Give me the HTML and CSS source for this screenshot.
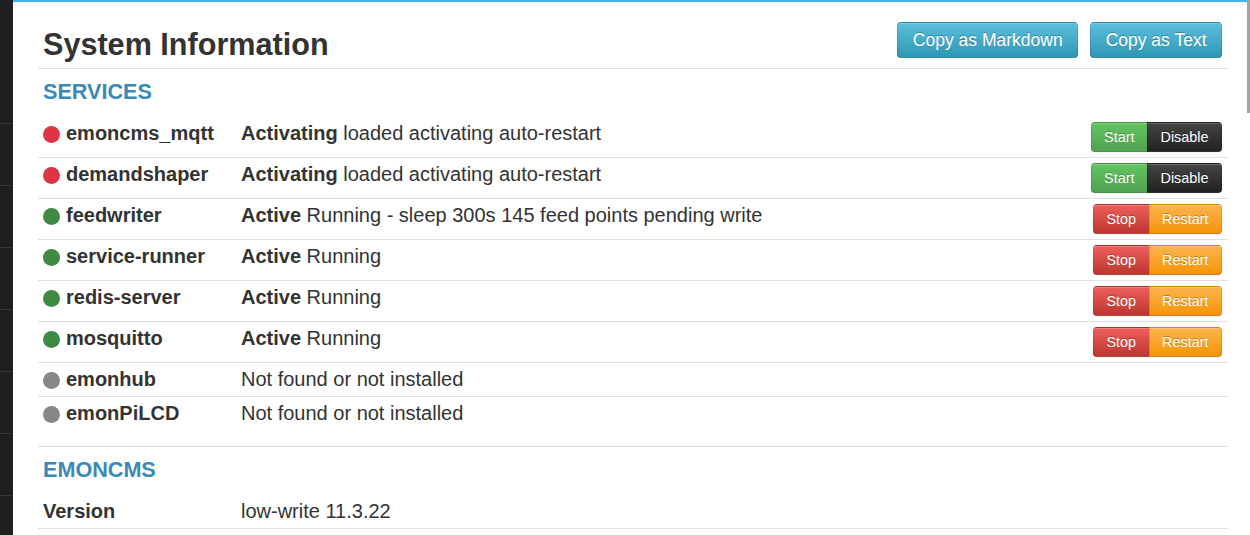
FILE: index.html
```html
<!DOCTYPE html>
<html lang="en">
<head>
<meta charset="utf-8">
<title>System Information</title>
<link rel="stylesheet" href="styles.css">
</head>
<body>
<div class="layout">
  <nav class="sidebar">
    <div class="side-top"></div>
    <div class="side-item"></div>
    <div class="side-item"></div>
    <div class="side-item"></div>
    <div class="side-item"></div>
    <div class="side-item"></div>
    <div class="side-item"></div>
  </nav>
  <main class="main">
    <div class="topline"></div>
    <div class="content">
      <div class="header">
        <h2 class="title">System Information</h2>
        <div class="header-actions">
          <button class="btn btn-info">Copy as Markdown</button>
          <button class="btn btn-info">Copy as Text</button>
        </div>
      </div>
      <div class="section">
        <h3 class="section-title">SERVICES</h3>
        <table class="info-table">
          <tr>
            <td class="name"><span class="dot dot-red"></span>emoncms_mqtt</td>
            <td class="status"><b>Activating</b> loaded activating auto-restart</td>
            <td class="actions"><span class="btn-group"><button class="sbtn sbtn-success">Start</button><button class="sbtn sbtn-inverse">Disable</button></span></td>
          </tr>
          <tr>
            <td class="name"><span class="dot dot-red"></span>demandshaper</td>
            <td class="status"><b>Activating</b> loaded activating auto-restart</td>
            <td class="actions"><span class="btn-group"><button class="sbtn sbtn-success">Start</button><button class="sbtn sbtn-inverse">Disable</button></span></td>
          </tr>
          <tr>
            <td class="name"><span class="dot dot-green"></span>feedwriter</td>
            <td class="status"><b>Active</b> Running - sleep 300s 145 feed points pending write</td>
            <td class="actions"><span class="btn-group"><button class="sbtn sbtn-danger">Stop</button><button class="sbtn sbtn-warning">Restart</button></span></td>
          </tr>
          <tr>
            <td class="name"><span class="dot dot-green"></span>service-runner</td>
            <td class="status"><b>Active</b> Running</td>
            <td class="actions"><span class="btn-group"><button class="sbtn sbtn-danger">Stop</button><button class="sbtn sbtn-warning">Restart</button></span></td>
          </tr>
          <tr>
            <td class="name"><span class="dot dot-green"></span>redis-server</td>
            <td class="status"><b>Active</b> Running</td>
            <td class="actions"><span class="btn-group"><button class="sbtn sbtn-danger">Stop</button><button class="sbtn sbtn-warning">Restart</button></span></td>
          </tr>
          <tr>
            <td class="name"><span class="dot dot-green"></span>mosquitto</td>
            <td class="status"><b>Active</b> Running</td>
            <td class="actions"><span class="btn-group"><button class="sbtn sbtn-danger">Stop</button><button class="sbtn sbtn-warning">Restart</button></span></td>
          </tr>
          <tr>
            <td class="name"><span class="dot dot-grey"></span>emonhub</td>
            <td class="status">Not found or not installed</td>
            <td class="actions"></td>
          </tr>
          <tr>
            <td class="name"><span class="dot dot-grey"></span>emonPiLCD</td>
            <td class="status">Not found or not installed</td>
            <td class="actions"></td>
          </tr>
        </table>
      </div>
      <div class="section">
        <h3 class="section-title">EMONCMS</h3>
        <table class="info-table info-table-last">
          <tr>
            <td class="name">Version</td>
            <td class="status">low-write 11.3.22</td>
          </tr>
        </table>
      </div>
    </div>
  </main>
</div>
<div class="scroll-thumb"></div>
</body>
</html>
```
FILE: styles.css
```css
html, body {
  margin: 0;
  padding: 0;
  height: 100%;
  overflow: hidden;
  background: #fff;
}
body {
  font-family: "Liberation Sans", Arial, sans-serif;
  color: #333;
}
.layout {
  display: flex;
  min-height: 100vh;
}
.sidebar {
  width: 13px;
  flex: 0 0 13px;
  background: #1f1f1f;
}
.side-top {
  height: 123px;
  border-bottom: 1px solid #353535;
}
.side-item {
  height: 61px;
  border-bottom: 1px solid #353535;
}
.main {
  flex: 1;
  min-width: 0;
}
.topline {
  height: 2px;
  background: #46b5e3;
  box-shadow: 0 1px 4px rgba(0, 0, 0, 0.12);
}
.content {
  width: 1190px;
  margin-left: 25px;
}
.header {
  display: flex;
  justify-content: space-between;
  align-items: flex-start;
  padding: 20px 6px 4px 5px;
  border-bottom: 1px solid #dedee3;
}
.title {
  margin: 2px 0 0;
  font-size: 30.6px;
  line-height: 40px;
  font-weight: bold;
  color: #333;
}
.header-actions {
  display: flex;
  gap: 12px;
}
.btn {
  height: 36px;
  padding: 0 14.5px;
  font-family: "Liberation Sans", Arial, sans-serif;
  font-size: 17.5px;
  line-height: 34px;
  color: #fff;
  text-shadow: 0 -1px 0 rgba(0, 0, 0, 0.25);
  border-radius: 4px;
  cursor: pointer;
}
.btn-info {
  background: linear-gradient(to bottom, #5bc0de, #2f96b4);
  border: 1px solid #2f96b4;
  border-color: rgba(0, 0, 0, 0.08) rgba(0, 0, 0, 0.1) rgba(0, 0, 0, 0.25);
  box-shadow: inset 0 1px 0 rgba(255, 255, 255, 0.2), 0 1px 2px rgba(0, 0, 0, 0.05);
}
.section {
  padding: 0;
}
.section + .section {
  margin-top: 16px;
  border-top: 1px solid #dedee3;
}
.section-title {
  margin: 8px 0 9px 5px;
  font-size: 21.6px;
  line-height: 30px;
  font-weight: bold;
  color: #3a8ab5;
}
.info-table {
  width: 100%;
  border-collapse: collapse;
  font-size: 20px;
  line-height: 23px;
}
.info-table td {
  padding: 5px;
  vertical-align: top;
  border-top: 1px solid #dedee3;
}
.info-table tr:first-child td {
  border-top-color: transparent;
}
.info-table-last tr:last-child td {
  border-bottom: 1px solid #dedee3;
}
.info-table td.name {
  width: 188px;
  font-weight: bold;
  white-space: nowrap;
}
.info-table td.actions {
  text-align: right;
  padding-right: 6px;
}
.dot {
  display: inline-block;
  width: 17px;
  height: 17px;
  border-radius: 50%;
  margin-right: 6px;
  vertical-align: -3px;
}
.dot-red { background: #dc3545; }
.dot-green { background: #3f8a43; }
.dot-grey { background: #878787; }
.btn-group {
  display: inline-flex;
  vertical-align: top;
}
.sbtn {
  height: 30px;
  padding: 0 12.5px;
  font-family: "Liberation Sans", Arial, sans-serif;
  font-size: 14.4px;
  line-height: 28px;
  color: #fff;
  text-shadow: 0 -1px 0 rgba(0, 0, 0, 0.25);
  border: 1px solid rgba(0, 0, 0, 0.1);
  border-bottom-color: rgba(0, 0, 0, 0.25);
  box-shadow: inset 0 1px 0 rgba(255, 255, 255, 0.2), 0 1px 2px rgba(0, 0, 0, 0.05);
  cursor: pointer;
}
.sbtn:first-child {
  border-radius: 4px 0 0 4px;
}
.sbtn:last-child {
  border-radius: 0 4px 4px 0;
  margin-left: -1px;
}
.sbtn-success { background: linear-gradient(to bottom, #62c462, #51a351); }
.sbtn-inverse { background: linear-gradient(to bottom, #444444, #222222); }
.sbtn-danger { background: linear-gradient(to bottom, #ee5f5b, #bd362f); }
.sbtn-warning { background: linear-gradient(to bottom, #fbb450, #f89406); }
.scroll-thumb {
  position: fixed;
  top: 0;
  right: 0;
  width: 3px;
  height: 113px;
  background: #a3a3a3;
}
```
